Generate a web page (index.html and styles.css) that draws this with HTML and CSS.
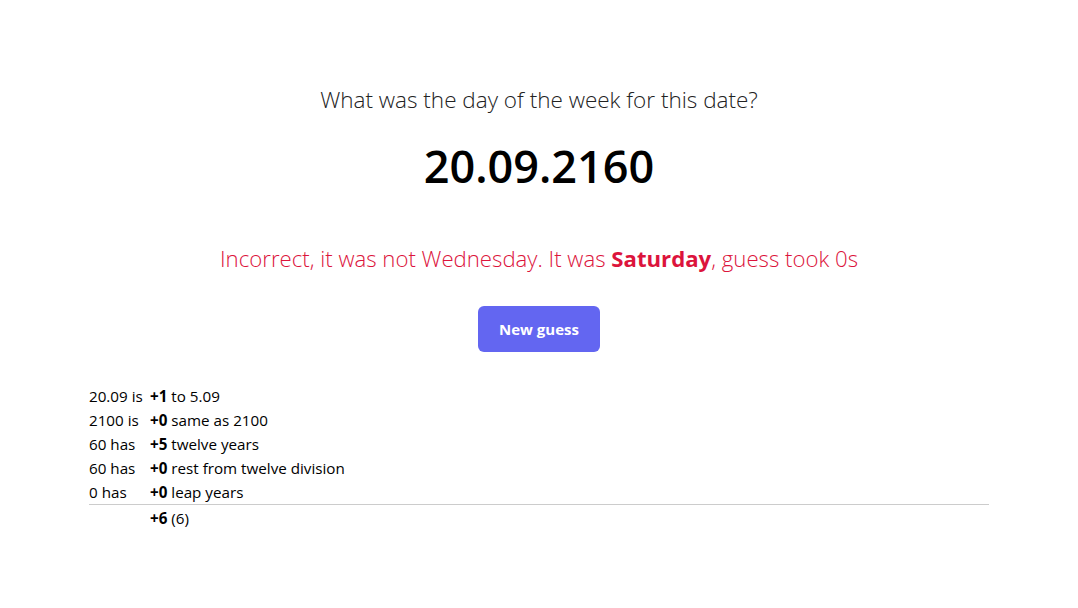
FILE: index.html
```html
<!DOCTYPE html>
<html>
<head>
<meta charset="utf-8">
<link rel="stylesheet" href="styles.css">
</head>
<body>
<main class="page">
  <h2 class="question">What was the day of the week for this date?</h2>
  <h1 class="date">20.09.2160</h1>
  <p class="result">Incorrect, it was not Wednesday. It was <b>Saturday</b>, guess took 0s</p>
  <div class="actions"><button class="btn">New guess</button></div>
  <table class="calc">
    <tr><td class="lbl">20.09 is</td><td><b>+1</b> to 5.09</td></tr>
    <tr><td class="lbl">2100 is</td><td><b>+0</b> same as 2100</td></tr>
    <tr><td class="lbl">60 has</td><td><b>+5</b> twelve years</td></tr>
    <tr><td class="lbl">60 has</td><td><b>+0</b> rest from twelve division</td></tr>
    <tr><td class="lbl">0 has</td><td><b>+0</b> leap years</td></tr>
    <tr class="total"><td class="lbl"></td><td><b>+6</b> (6)</td></tr>
  </table>
</main>
</body>
</html>
```
FILE: styles.css
```css
html, body { margin: 0; padding: 0; background: #fff; }
body { font-family: "Open Sans", "Noto Sans", sans-serif; color: #000; }
.page { max-width: 900px; margin: 0 auto; padding-top: 84px; }
.question { margin: 0; text-align: center; font-size: 22.5px; font-weight: 300; color: #222; line-height: 32px; }
.date { margin: 18px 0 0; text-align: center; font-size: 45px; font-weight: 600; line-height: 64px; }
.result { margin: 45px 0 0; text-align: center; font-size: 22.2px; font-weight: 300; color: #dc143c; line-height: 32px; }
.result b { font-weight: 700; }
.actions { display: flex; justify-content: center; margin-top: 31px; }
.btn { background: #6366f1; color: #fff; border: none; border-radius: 6px; width: 122px; height: 46px; font-family: inherit; font-size: 15px; font-weight: 700; }
.calc { width: 100%; border-collapse: collapse; margin-top: 32px; font-size: 15.2px; line-height: 24px; }
.calc td { padding: 0; vertical-align: top; }
.calc td.lbl { width: 61px; white-space: nowrap; }
.calc b { font-weight: 700; }
.calc tr.total td { border-top: 1px solid #ccc; padding-top: 1px; }
```
